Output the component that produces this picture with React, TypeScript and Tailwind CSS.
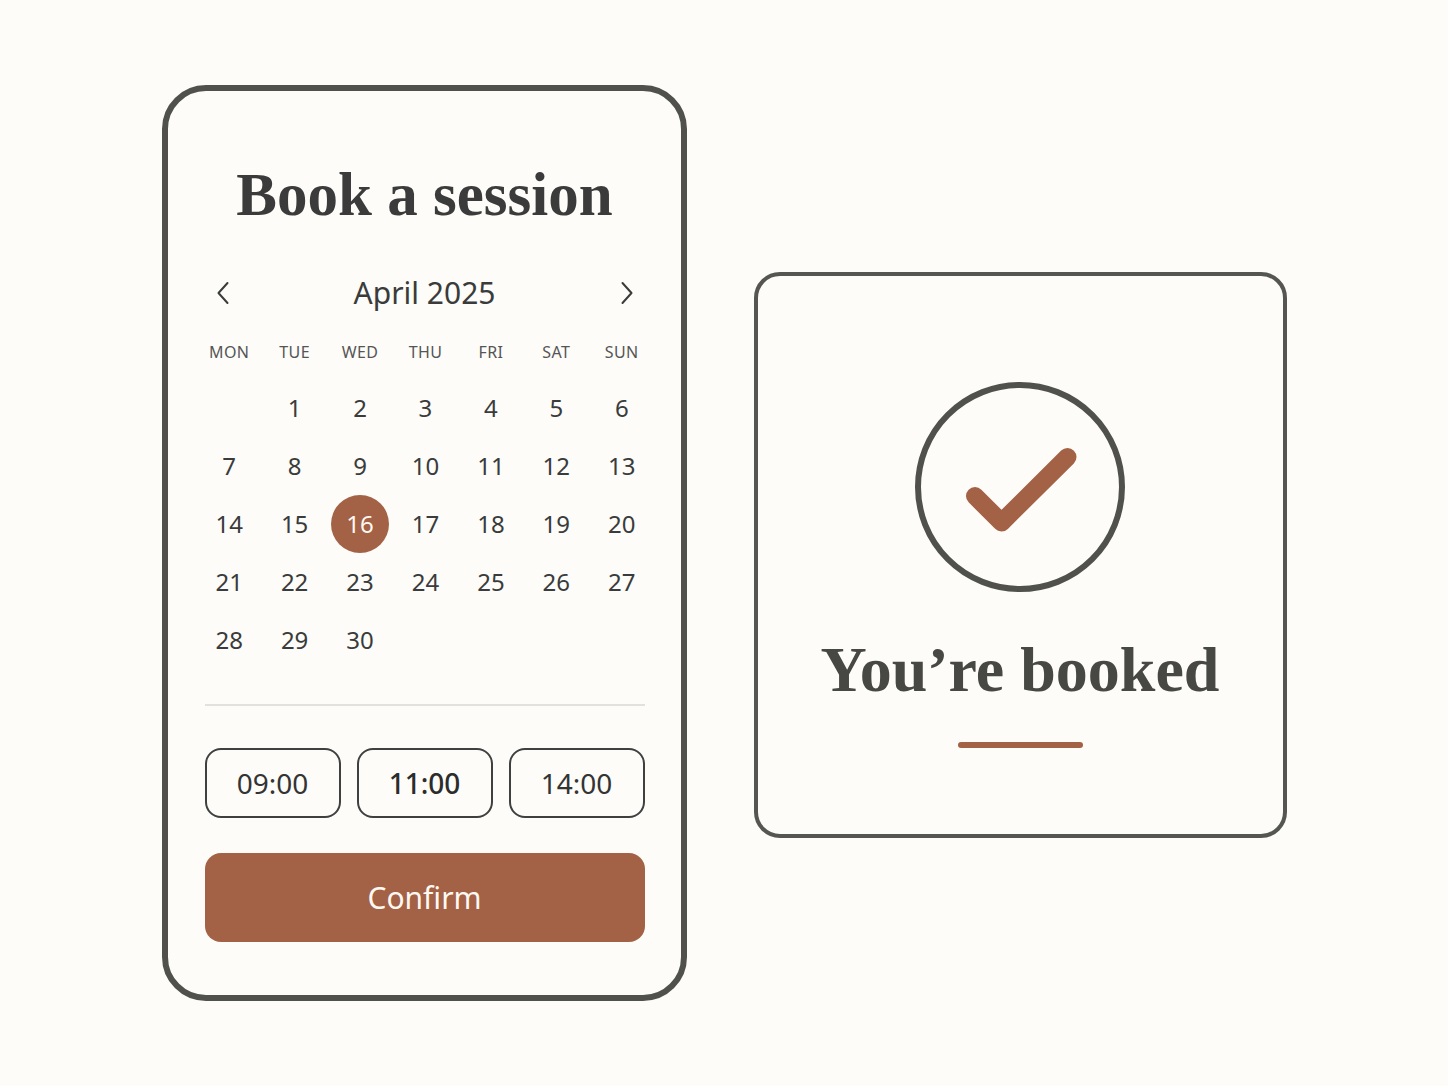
import { useState } from "react";

const WEEKDAYS = ["MON", "TUE", "WED", "THU", "FRI", "SAT", "SUN"];

// April 2025 starts on a Tuesday
const WEEKS: (number | null)[][] = [
  [null, 1, 2, 3, 4, 5, 6],
  [7, 8, 9, 10, 11, 12, 13],
  [14, 15, 16, 17, 18, 19, 20],
  [21, 22, 23, 24, 25, 26, 27],
  [28, 29, 30, null, null, null, null],
];

const TIMES = ["09:00", "11:00", "14:00"];

function Chevron({ direction }: { direction: "left" | "right" }) {
  return (
    <svg
      className="h-6 w-3"
      viewBox="0 0 12 24"
      fill="none"
      stroke="currentColor"
      strokeWidth="2"
      strokeLinecap="round"
      strokeLinejoin="round"
      aria-hidden="true"
    >
      <path d={direction === "left" ? "M10.5 2 1.5 12l9 10" : "M1.5 2l9 10-9 10"} />
    </svg>
  );
}

function Calendar({
  selected,
  onSelect,
}: {
  selected: number;
  onSelect: (day: number) => void;
}) {
  return (
    <div className="-ml-2 -mr-2.5">
      <table className="w-full table-fixed border-collapse">
        <thead>
          <tr className="h-[54px]">
            {WEEKDAYS.map((day) => (
              <th
                key={day}
                scope="col"
                className="p-0 text-center text-base font-normal tracking-wide text-[#555555]"
              >
                {day}
              </th>
            ))}
          </tr>
        </thead>
        <tbody>
          {WEEKS.map((week, i) => (
            <tr key={i} className="h-[58px]">
              {week.map((day, j) => (
                <td key={j} className="p-0 text-center">
                  {day !== null && (
                    <button
                      type="button"
                      aria-pressed={day === selected}
                      onClick={() => onSelect(day)}
                      className={
                        day === selected
                          ? "size-[58px] rounded-full bg-[#a36145] align-middle text-2xl text-[#fdf8f2]"
                          : "size-[58px] rounded-full align-middle text-2xl text-[#3a3b3b]"
                      }
                    >
                      {day}
                    </button>
                  )}
                </td>
              ))}
            </tr>
          ))}
        </tbody>
      </table>
    </div>
  );
}

function BookingCard() {
  const [day, setDay] = useState(16);
  const [time, setTime] = useState("11:00");

  return (
    <section className="w-full max-w-[525px] rounded-[44px] border-6 border-[#50504d] pb-[53px] pl-[37px] pr-9 pt-[68px]">
      <h1 className="text-center font-['Liberation_Serif',serif] text-[61px] font-bold leading-[72px] text-[#3b3b3b]">
        Book a session
      </h1>

      <div className="mb-3 mt-[42px] flex h-10 items-center justify-between text-[#3a3b3b]">
        <button type="button" aria-label="Previous month" className="px-3 py-2">
          <Chevron direction="left" />
        </button>
        <h2 className="text-[30px] leading-9">April 2025</h2>
        <button type="button" aria-label="Next month" className="px-3 py-2">
          <Chevron direction="right" />
        </button>
      </div>

      <Calendar selected={day} onSelect={setDay} />

      <hr className="mt-[35px] border-t-2 border-[#e2e1de]" />

      <div className="mt-[42px] grid grid-cols-3 gap-4">
        {TIMES.map((slot) => (
          <button
            key={slot}
            type="button"
            aria-pressed={slot === time}
            onClick={() => setTime(slot)}
            className={
              slot === time
                ? "h-[70px] rounded-2xl border-2 border-[#3f4040] text-[28px] font-medium text-[#2b2c2c]"
                : "h-[70px] rounded-2xl border-2 border-[#3f4040] text-[28px] text-[#333434]"
            }
          >
            {slot}
          </button>
        ))}
      </div>

      <button
        type="button"
        className="mt-[35px] h-[89px] w-full rounded-2xl bg-[#a36145] text-[30px] text-[#fdf8f2]"
      >
        Confirm
      </button>
    </section>
  );
}

function BookedCard() {
  return (
    <section className="mt-6 flex w-full max-w-[533px] flex-col items-center rounded-[26px] border-4 border-[#555552] px-8 pb-[86px] pt-[106px]">
      <svg className="size-[210px]" viewBox="0 0 210 210" fill="none" aria-hidden="true">
        <circle cx="105" cy="105" r="102" stroke="#50504d" strokeWidth="6" />
        <path
          d="M60 114l26.5 26.5L152.5 75"
          stroke="#a36145"
          strokeWidth="18"
          strokeLinecap="round"
          strokeLinejoin="round"
        />
      </svg>
      <h2 className="mt-10 whitespace-nowrap font-['Liberation_Serif',serif] text-[64px] font-bold leading-[76px] text-[#474744]">
        You’re booked
      </h2>
      <div className="mt-[34px] h-[6px] w-[125px] rounded-full bg-[#a36145]" />
    </section>
  );
}

export default function App() {
  return (
    <main className="flex min-h-screen flex-wrap items-center justify-center gap-[67px] bg-[#fdfcf9] px-6 py-10 font-['Noto_Sans',sans-serif]">
      <BookingCard />
      <BookedCard />
    </main>
  );
}
